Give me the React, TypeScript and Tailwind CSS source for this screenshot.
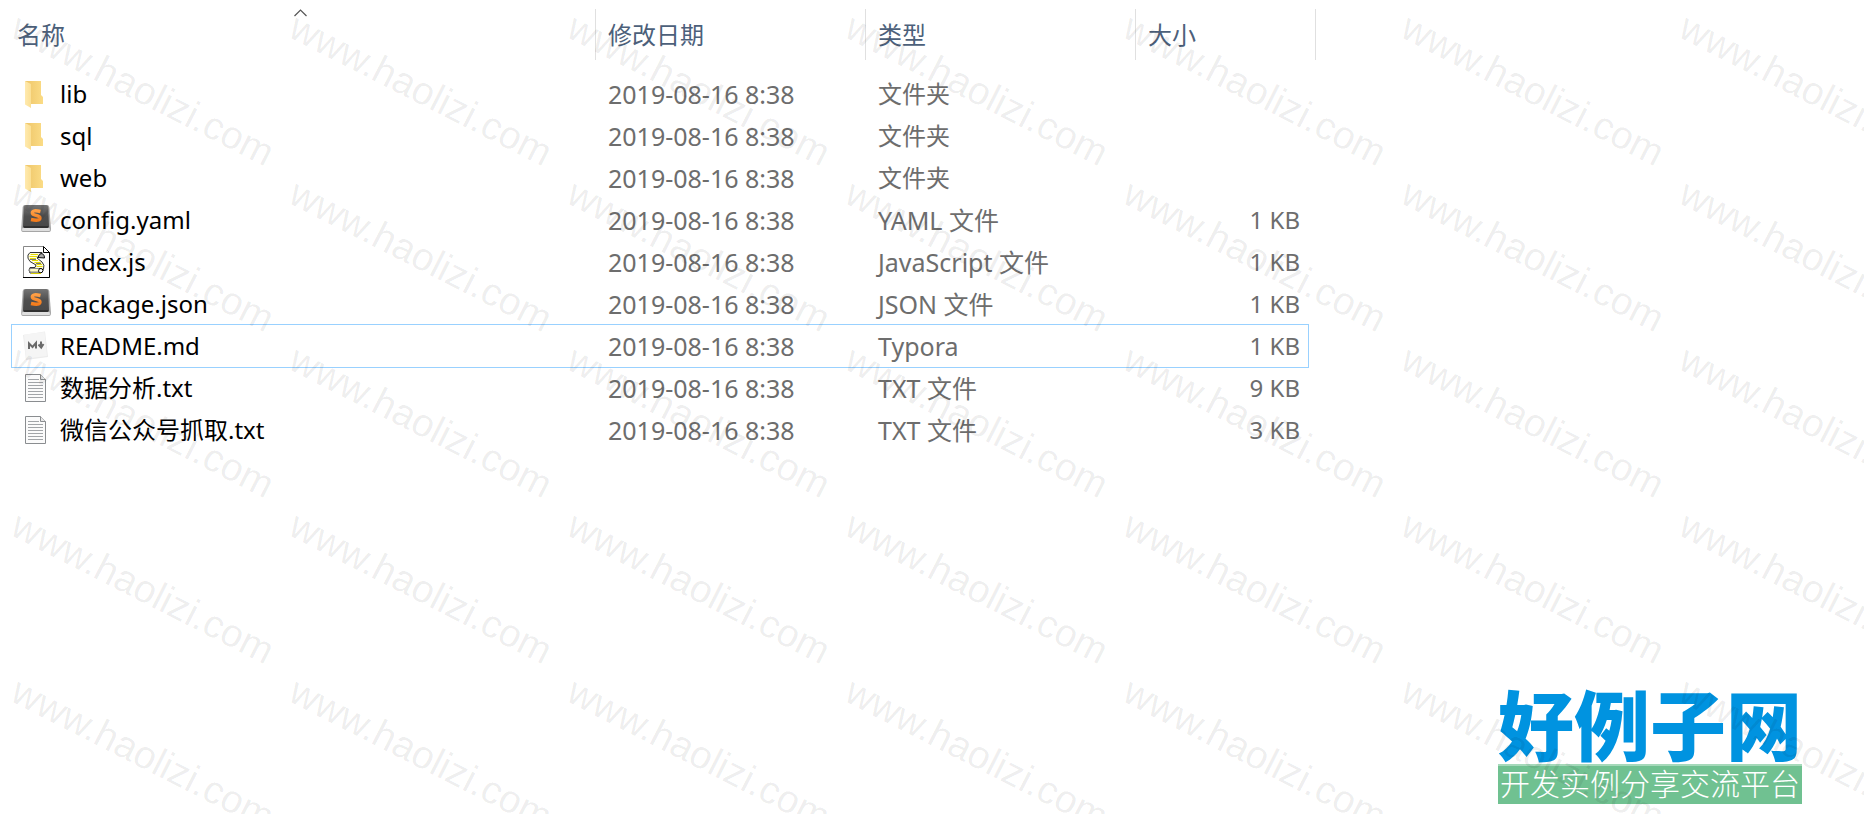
import type { ReactNode } from "react";

type Kind = "folder" | "sublime" | "script" | "markdown" | "text";

interface Entry {
  name: string;
  kind: Kind;
  type: string;
  size: string;
  focused?: boolean;
}

const modified = "2019-08-16 8:38";

const entries: Entry[] = [
  { name: "lib", kind: "folder", type: "文件夹", size: "" },
  { name: "sql", kind: "folder", type: "文件夹", size: "" },
  { name: "web", kind: "folder", type: "文件夹", size: "" },
  { name: "config.yaml", kind: "sublime", type: "YAML 文件", size: "1 KB" },
  { name: "index.js", kind: "script", type: "JavaScript 文件", size: "1 KB" },
  { name: "package.json", kind: "sublime", type: "JSON 文件", size: "1 KB" },
  { name: "README.md", kind: "markdown", type: "Typora", size: "1 KB", focused: true },
  { name: "数据分析.txt", kind: "text", type: "TXT 文件", size: "9 KB" },
  { name: "微信公众号抓取.txt", kind: "text", type: "TXT 文件", size: "3 KB" },
];

function FolderIcon() {
  return (
    <svg viewBox="0 0 30 32" className="h-8 w-[30px]" aria-hidden="true">
      <defs>
        <linearGradient id="folderBack" x1="0" x2="1">
          <stop offset="0" stopColor="#eec568" />
          <stop offset="1" stopColor="#fbdc86" />
        </linearGradient>
        <linearGradient id="folderFront" x1="0" x2="1">
          <stop offset="0" stopColor="#ffeaaf" />
          <stop offset="1" stopColor="#fbdf94" />
        </linearGradient>
      </defs>
      <path d="M4 3H20V17L22 19V26H9Z" fill="url(#folderBack)" />
      <path d="M4 3L10 6V30L4 26.500Z" fill="url(#folderFront)" />
    </svg>
  );
}

function SublimeIcon() {
  return (
    <svg viewBox="0 0 30 32" className="h-8 w-[30px]" aria-hidden="true">
      <defs>
        <linearGradient id="keyTop" x1="0" y1="0" x2="0" y2="1">
          <stop offset="0" stopColor="#747474" />
          <stop offset=".5" stopColor="#4e4e4e" />
          <stop offset="1" stopColor="#484848" />
        </linearGradient>
        <linearGradient id="keyLetter" x1="0" y1="0" x2="0" y2="1">
          <stop offset="0" stopColor="#ff9f45" />
          <stop offset="1" stopColor="#f47c1c" />
        </linearGradient>
      </defs>
      <path d="M4 1H26Q28 1 28.300 3L30 25Q30 28 28 28H2Q0 28 .2 25L1.700 3Q2 1 4 1Z" fill="#a6a6a6" />
      <path d="M1.500 24H28.500L29 26Q29 27 28 27H2Q1 27 1 26Z" fill="#dedede" />
      <path d="M5 1H25Q27 1 27.200 3L28 22Q28 24 26 24H4Q2 24 2 22L2.800 3Q3 1 5 1Z" fill="url(#keyTop)" />
      <path d="M2.500 22H27.500V23Q27 24 26 24H4Q3 24 2.500 23Z" fill="#303030" />
      <path
        d="M19.500 7.500Q11.500 5.500 11.300 8.800Q11.300 10.600 15 11.400Q19.200 12.300 19 14.200Q18.500 17.500 10 15.500"
        fill="none"
        stroke="url(#keyLetter)"
        strokeWidth="3.400"
      />
    </svg>
  );
}

function ScriptIcon() {
  return (
    <svg viewBox="0 0 30 32" className="h-8 w-[30px]" aria-hidden="true">
      <path d="M2.500 .5H22L28.500 7V31.500H2.500Z" fill="#fff" stroke="#888" />
      <path d="M28.500 6V31.500H2" fill="none" stroke="#000" />
      <path d="M22.500 .5V6.500H28.500Z" fill="#fff" stroke="#000" />
      <path
        d="M9 6.500H21L18 9.500L16 12L21 16Q24 19 22.500 23L20 27H9Q7 24 9 21.500H14L15 19L9 15.500Q6 12 7 9Z"
        fill="#fffde0"
        stroke="#333"
      />
      <path
        d="M9.500 8.500H17M8.500 10.500H16M9 12.500H15M11 14.500H17M13.500 16.500H19.500M15.500 18.500H21M15.500 20.500H21.500"
        stroke="#e3da00"
      />
      <path d="M9 13.500H15M15 17.500H20" stroke="#777" />
      <path d="M17 11.500Q18 7 21 7.500Q24 9 23.500 12Z" fill="#aaa" stroke="#111" />
      <path d="M9 22.500H19Q17 24 19 26H9Q8 24 9 22.500Z" fill="#fffbc4" stroke="#888" />
      <path d="M18.500 22.500Q22 22 22 24.500Q22 27 18.500 27Q16.500 25 18.500 22.500Z" fill="#fff" stroke="#000" />
      <path d="M10 27.500H20" stroke="#d6cc00" />
    </svg>
  );
}

function MarkdownIcon() {
  return (
    <svg viewBox="0 0 30 32" className="h-8 w-[30px]" aria-hidden="true">
      <path d="M2 5L24 1.500L27 27L5 30Z" fill="#ececec" />
      <path d="M3 4.500L23.500 2L26 26L5 28.500Z" fill="#f5f5f5" />
      <path d="M8 19V13.500L11.500 17L15 13V18.500" fill="none" stroke="#6a6a6a" strokeWidth="2" />
      <path d="M20 11.500V17M17.500 14.500L20.200 17.500L22.500 14" fill="none" stroke="#6a6a6a" strokeWidth="2" />
    </svg>
  );
}

function TextIcon() {
  return (
    <svg viewBox="0 0 30 32" className="h-8 w-[30px]" aria-hidden="true">
      <path d="M4.500 2.500H19.500L24.500 7.500V29.500H4.500Z" fill="#fbfbfb" stroke="#8a8d90" />
      <path d="M19.500 2.500V7.500H24.500" fill="#e8e8e8" stroke="#8a8d90" />
      <path
        d="M7 7.500H18M7 10.500H22M7 13.500H22M7 16.500H22M7 19.500H22M7 22.500H22M7 25.500H22"
        stroke="#a2a5a8"
      />
    </svg>
  );
}

const icons: Record<Kind, ReactNode> = {
  folder: <FolderIcon />,
  sublime: <SublimeIcon />,
  script: <ScriptIcon />,
  markdown: <MarkdownIcon />,
  text: <TextIcon />,
};

const hasLatin = (value: string) => /[A-Za-z]/.test(value);

function HeaderCell({ label, sorted, last }: { label: string; sorted?: boolean; last?: boolean }) {
  return (
    <th scope="col" className="h-16 p-0 text-left align-top font-normal" aria-sort={sorted ? "ascending" : undefined}>
      <button
        type="button"
        className={`relative flex h-[51px] items-center border-r border-[#e0e0e0] text-[24px] text-[#4c607a] ${
          sorted ? "pl-[5px]" : "pl-3"
        } ${last ? "-mr-2 w-[180px]" : "w-full"}`}
      >
        {label}
        {sorted && (
          <svg viewBox="0 0 14 8" className="absolute top-0 left-[282px] h-2 w-3.5" aria-hidden="true">
            <path d="M.5 7L6.500 1L12.500 7" fill="none" stroke="#555" strokeWidth="1.200" />
          </svg>
        )}
      </button>
    </th>
  );
}

function Watermark() {
  return (
    <div aria-hidden="true" className="pointer-events-none absolute inset-0 overflow-hidden">
      <div className="grid w-max grid-cols-[repeat(7,278px)] auto-rows-[166px] pt-1.5 pl-1">
        {Array.from({ length: 35 }, (_, i) => (
          <div key={i} className="flex items-center justify-center">
            <span className="rotate-[27deg] font-['Liberation_Sans',sans-serif] text-[39px] leading-none text-black/7">
              www.haolizi.com
            </span>
          </div>
        ))}
      </div>
    </div>
  );
}

export default function App() {
  return (
    <div className="relative flex min-h-screen flex-col overflow-hidden bg-white font-['Noto_Sans','Noto_Sans_CJK_SC',sans-serif]">
      <main className="pt-[9px] pl-3">
        <table className="table-fixed border-collapse leading-8">
          <colgroup>
            <col className="w-[584px]" />
            <col className="w-[270px]" />
            <col className="w-[270px]" />
            <col className="w-[172px]" />
          </colgroup>
          <thead>
            <tr>
              <HeaderCell label="名称" sorted />
              <HeaderCell label="修改日期" />
              <HeaderCell label="类型" />
              <HeaderCell label="大小" last />
            </tr>
          </thead>
          <tbody className="text-[#6d6d6d]">
            {entries.map((entry) => (
              <tr key={entry.name} className={entry.focused ? "outline-1 outline-[#99d1ff]" : ""}>
                <td className="h-[42px] p-0">
                  <div className="flex items-center gap-[9px] pl-[9px] text-black">
                    {icons[entry.kind]}
                    <span className="text-[24px]">{entry.name}</span>
                  </div>
                </td>
                <td className="p-0 pl-3 text-[25px]">{modified}</td>
                <td className={`p-0 pl-3 ${hasLatin(entry.type) ? "text-[25px]" : "text-[24px]"}`}>{entry.type}</td>
                <td className="p-0 pr-2 text-right text-[24px]">{entry.size}</td>
              </tr>
            ))}
          </tbody>
        </table>
      </main>

      <footer className="mt-auto mr-[62px] flex w-[304px] flex-col self-end pb-2.5 font-['Noto_Sans_CJK_SC',sans-serif]">
        <div className="flex justify-center pb-1 text-[76px] leading-[76px] font-black whitespace-nowrap text-[#0093e0]">
          好例子网
        </div>
        <div className="flex h-10 items-center justify-center border-t-2 border-[#a5d9ba] bg-[#70c191] pb-1.5 text-[30px] leading-none font-light whitespace-nowrap text-white">
          开发实例分享交流平台
        </div>
      </footer>

      <Watermark />
    </div>
  );
}
